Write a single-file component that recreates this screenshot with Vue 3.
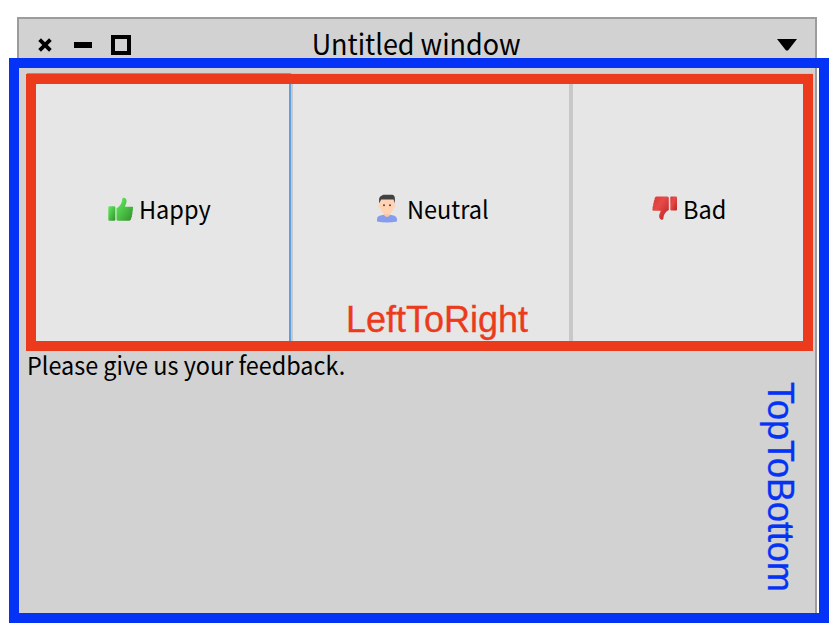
<script setup>
const cells = [
  { label: 'Happy', icon: 'up' },
  { label: 'Neutral', icon: 'person' },
  { label: 'Bad', icon: 'down' },
]
</script>

<template>
  <main class="stage">
    <section class="window">
      <header class="titlebar">
        <div class="controls">
          <svg class="close" width="14" height="14" viewBox="0 0 14 14"><path d="M1.6 1.6 12.4 12.4M12.4 1.6 1.6 12.4" stroke="#000" stroke-width="3.8" /></svg>
          <span class="minimize"></span>
          <span class="maximize"></span>
        </div>
        <h1 class="title">Untitled window</h1>
        <svg class="menu" width="20" height="12" viewBox="0 0 20 12"><path d="M0 0H20L11 11.6H9Z" fill="#000" /></svg>
      </header>
      <div class="buttons">
        <button v-for="c in cells" :key="c.label" class="cell" :class="c.icon">
          <svg v-if="c.icon === 'up'" class="icon" width="26" height="25" viewBox="0 0 26 25">
            <defs><linearGradient id="green" x1="0" y1="0" x2="1" y2="1"><stop offset="0" stop-color="#66ec62" /><stop offset=".45" stop-color="#4cc747" /><stop offset="1" stop-color="#358d30" /></linearGradient></defs>
            <rect x=".3" y="9.2" width="7" height="14.6" rx="1.2" fill="url(#green)" />
            <path d="M8.5 11.2C12.5 8.9 14 5.5 14.3 1.9C14.5-.1 18.6.5 18.6 4C18.6 6.4 17.2 8.2 17 9.7H24C25.4 9.7 25.3 11.4 24.7 12C25.2 13 24.8 14.4 24.3 15C24.8 16 24.3 17.6 23.8 18.1C24.3 19 23.8 20.4 23.2 20.9C23.4 22.7 22.4 23.8 21 23.8H10Q8.5 23.8 8.5 22.3Z" fill="url(#green)" />
          </svg>
          <svg v-else-if="c.icon === 'person'" class="icon" width="22" height="29" viewBox="0 0 22 29">
            <path d="M1 25.5Q1 21.6 5.5 21.3L8 20.8H14L16.5 21.3Q21 21.8 21 25.8V27.4Q11 29.5 1 27.4Z" fill="#879ced" />
            <path d="M8 18H14V21.3Q11 24.6 8 21.3Z" fill="#f7c7a5" />
            <path d="M4 7.6H18V10Q20 10 19.4 12.5Q18.9 14.2 17.6 14.2C16.8 18 13.8 20.4 11 20.4C8.2 20.4 5.2 18 4.4 14.2Q3.1 14.2 2.6 12.5Q2 10 4 10Z" fill="#ffd3b3" />
            <path d="M4.6 8V5.2H17.6V8Z" fill="#ffd3b3" />
            <path d="M3.1 9.6V4.7Q3.4 2 5.9 1.4L7.4.8H16.4Q18.9 1.5 18.9 4.7V9.6L17.5 5.5H5.2Z" fill="#414141" />
            <circle cx="8" cy="11.3" r="1" fill="#5a4030" /><circle cx="14" cy="11.3" r="1" fill="#5a4030" />
          </svg>
          <svg v-else class="icon" width="26" height="25" viewBox="0 0 26 25">
            <defs><linearGradient id="red" x1="0" y1="0" x2="1" y2="1"><stop offset="0" stop-color="#d93736" /><stop offset=".4" stop-color="#e54b49" /><stop offset="1" stop-color="#bd2222" /></linearGradient></defs>
            <rect x="18.3" y=".5" width="6.7" height="14" rx="1" fill="url(#red)" />
            <path d="M16.8 14C13.3 15.8 11.7 18.5 11.4 22.2C11.1 24.7 7.3 24 7.1 20.6C7 18.2 8.5 16.5 8.7 14.8H1.7C.1 14.8.1 13.3.7 12.5C.3 11.5.8 10.3 1.3 9.6C.9 8.6 1.4 7.2 1.9 6.6C1.5 5.6 2 4.3 2.6 3.7C2.3 2 3.2.5 4.8.5H15.3Q16.8.5 16.8 2Z" fill="url(#red)" />
          </svg>
          <span class="label">{{ c.label }}</span>
        </button>
      </div>
      <p class="prompt">Please give us your feedback.</p>
    </section>
    <div class="outline vertical"><span class="note">TopToBottom</span></div>
    <div class="outline horizontal"><span class="note">LeftToRight</span></div>
  </main>
</template>

<style>
body { background: #fff; }
</style>

<style scoped>
* { box-sizing: border-box; }
.stage { position: relative; width: 834px; height: 634px; padding: 17px; overflow: hidden; font-family: "Noto Sans CJK SC", "Noto Sans", sans-serif; color: #000; }
.window { width: 800px; height: 602px; border: 2px solid #9c9c9c; background: #d2d2d2; }
.titlebar { display: grid; grid-template-columns: 200px 1fr 200px; align-items: center; height: 54px; padding: 0 18px 2px 19px; }
.controls { display: flex; align-items: center; }
.close { margin-right: 22px; }
.minimize { width: 18px; height: 6px; margin-right: 19px; background: #000; }
.maximize { width: 20px; height: 20px; border: 4px solid #000; }
.title { margin: 0; padding: 0 3px 4px 0; font-size: 28.5px; line-height: 40px; font-weight: 400; text-align: center; white-space: nowrap; transform: scaleX(.945); }
.menu { justify-self: end; }
.buttons { display: flex; height: 278px; margin: 0 6px 0 8px; background: #c8c8c8; }
.cell { display: flex; align-items: center; justify-content: center; flex: none; height: 278px; margin: 0; padding: 0 0 8px; border: 0; border-top: 1px solid #c8c8c8; background: #e6e6e6; font: inherit; color: inherit; }
.up { width: 264px; padding-left: 4px; padding-bottom: 6px; border: 1px solid #5f9fdf; border-right-width: 2px; }
.person { width: 276px; margin-left: 2px; padding-left: 6px; }
.down { width: 240px; margin-left: 4px; padding-right: 6px; }
.icon { flex: none; margin-right: 5px; }
.person .icon { margin-right: 9px; }
.label { font-size: 24.5px; line-height: 32px; transform: scaleX(.96); transform-origin: left; }
.prompt { margin: 0 0 0 8px; font-size: 24.5px; line-height: 28px; white-space: nowrap; transform: scaleX(.955); transform-origin: left; }
.outline { position: absolute; border: 10px solid; font-family: "Liberation Sans", Arial, sans-serif; }
.vertical { left: 9px; top: 58px; width: 820px; height: 565px; border-color: #0433f5; color: #0433f5; }
.horizontal { left: 26px; top: 74px; width: 787px; height: 277px; border-color: #eb3b1c; color: #eb3b1c; }
.note { position: absolute; font-size: 36px; line-height: 42px; white-space: nowrap; -webkit-text-stroke: .35px currentColor; }
.horizontal .note { left: 310px; top: 215px; }
.vertical .note { right: 18px; top: 314px; writing-mode: vertical-rl; }
</style>
